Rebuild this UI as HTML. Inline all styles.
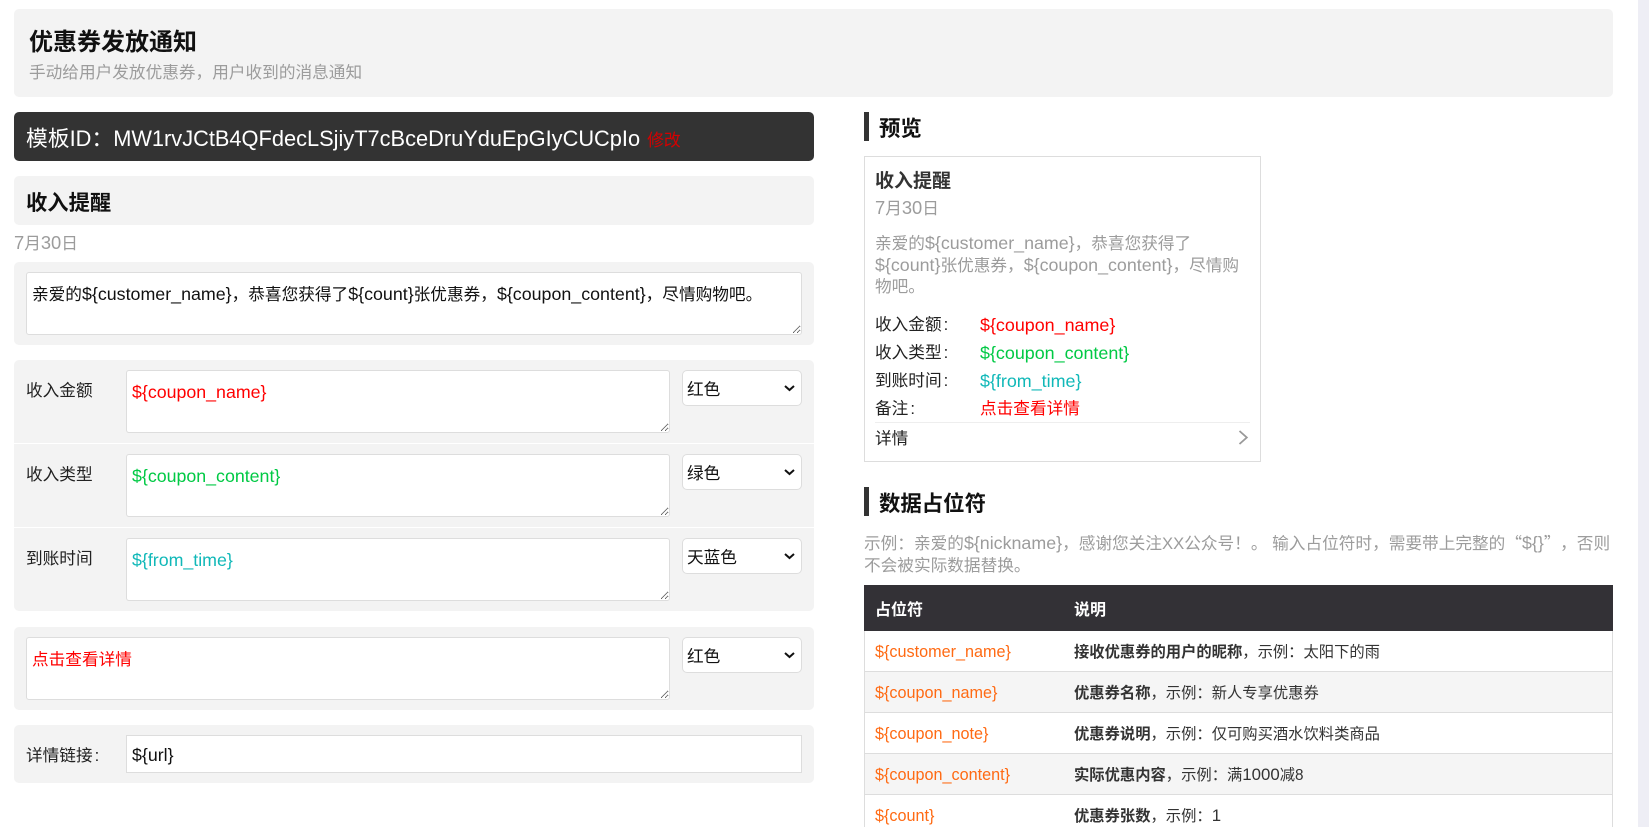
<!DOCTYPE html>
<html lang="zh">
<head>
<meta charset="utf-8">
<title>优惠券发放通知</title>
<style>
html,body{margin:0;padding:0;width:1649px;height:827px;overflow:hidden;background:#fff}
body{font-family:"Liberation Sans","Noto Sans CJK SC",sans-serif;font-size:16.67px;color:#222;position:relative}
.a{position:absolute;white-space:nowrap}
.box{position:absolute;background:#f3f3f3;border-radius:5px}
textarea,input,select,.ta{position:absolute;box-sizing:border-box;font-family:"Liberation Sans","Noto Sans CJK SC",sans-serif;font-size:16.67px;background:#fff;border:1px solid #ddd;color:#111;outline:0;margin:0}
textarea,.ta{border-radius:3px;padding:10px 5px;line-height:22px;resize:both;overflow:hidden;white-space:nowrap}
textarea.lat{font-size:17.8px;padding-top:10px}
select{-webkit-appearance:none;appearance:none;border-radius:5px;width:120px;height:36px;padding:2px 0 0 4px;left:682px}
input{padding:2px 5px 0;font-size:17.8px}
.chev{position:absolute;left:784px;pointer-events:none}
.bar{position:absolute;left:864px;width:5px;background:#333}
.h{position:absolute;left:879px;font-size:21.4px;font-weight:bold;color:#111;line-height:28px;white-space:nowrap}
.g{color:#9c9c9c}
.r{color:#f00}.gn{color:#00c944}.t{color:#10b8b8}
.l{font-size:1.07em}
.n{font-size:1.1em}
.q{font-family:"Noto Sans CJK SC",sans-serif}
.lab{left:26px;line-height:22px}
.row{position:absolute;left:875px;line-height:28px;white-space:nowrap}
.row i{font-style:normal;margin-left:2px}
.row b{font-weight:normal;position:absolute;left:105px;top:0}
.row b.v{font-size:17.9px}
table{position:absolute;left:864px;top:585px;width:749px;border-collapse:separate;border-spacing:0;table-layout:fixed;font-size:15.3px;color:#333}
th{background:#333136;color:#fff;height:46px;padding:0;text-align:left;font-size:16px;font-weight:bold}
th:first-child{padding-left:11px}
td{height:40px;padding:0;border-bottom:1px solid #ddd;white-space:nowrap}
td:first-child{color:#ff6a13;font-size:16.2px;border-left:1px solid #ddd;padding-left:10px}
td:first-child span{position:relative;top:1px}
td:last-child{border-right:1px solid #ddd}
td:last-child b{color:#333}
tr.e td{background:#f5f5f5}
</style>
</head>
<body>
<div class="box" style="left:14px;top:9px;width:1599px;height:88px"></div>
<div class="a" style="left:29px;top:27px;font-size:24px;font-weight:bold;color:#111;line-height:32px">优惠券发放通知</div>
<div class="a g" style="left:29px;top:62px;line-height:22px">手动给用户发放优惠券，用户收到的消息通知</div>

<div class="box" style="left:14px;top:112px;width:800px;height:49px;background:#333"></div>
<div class="a" style="left:26px;top:124px;font-size:21.8px;line-height:30px;color:#fff">模板ID：MW1rvJCtB4QFdecLSjiyT7cBceDruYduEpGIyCUCpIo<span style="font-size:16.8px;color:#d40000;margin-left:7px">修改</span></div>

<div class="box" style="left:14px;top:176px;width:800px;height:49px"></div>
<div class="a" style="left:26px;top:188px;font-size:21.3px;font-weight:bold;color:#111;line-height:30px">收入提醒</div>
<div class="a g" style="left:14px;top:232px;line-height:22px"><span class="n">7</span>月<span class="n">30</span>日</div>

<div class="box" style="left:14px;top:262px;width:800px;height:83px"></div>
<div class="ta" style="left:26px;top:272px;width:776px;height:63px;padding-top:10px">亲爱的<span class="l">${customer_name}</span>，恭喜您获得了<span class="l">${count}</span>张优惠券，<span class="l">${coupon_content}</span>，尽情购物吧。</div>

<div class="box" style="left:14px;top:360px;width:800px;height:251px"></div>
<div class="a" style="left:14px;top:443px;width:800px;height:1px;background:#fff"></div>
<div class="a" style="left:14px;top:527px;width:800px;height:1px;background:#fff"></div>

<div class="a lab" style="top:380px">收入金额</div>
<textarea class="lat" style="left:126px;top:370px;width:544px;height:63px;color:#f00">${coupon_name}</textarea>
<select style="top:370px"><option>红色</option></select>
<svg class="chev" style="top:385px" width="11" height="7" viewBox="0 0 11 7"><path d="M1 1 L5.5 5 L10 1" fill="none" stroke="#111" stroke-width="2"/></svg>

<div class="a lab" style="top:464px">收入类型</div>
<textarea class="lat" style="left:126px;top:454px;width:544px;height:63px;color:#00c944">${coupon_content}</textarea>
<select style="top:454px"><option>绿色</option></select>
<svg class="chev" style="top:469px" width="11" height="7" viewBox="0 0 11 7"><path d="M1 1 L5.5 5 L10 1" fill="none" stroke="#111" stroke-width="2"/></svg>

<div class="a lab" style="top:548px">到账时间</div>
<textarea class="lat" style="left:126px;top:538px;width:544px;height:63px;color:#10b8b8">${from_time}</textarea>
<select style="top:538px"><option>天蓝色</option></select>
<svg class="chev" style="top:553px" width="11" height="7" viewBox="0 0 11 7"><path d="M1 1 L5.5 5 L10 1" fill="none" stroke="#111" stroke-width="2"/></svg>

<div class="box" style="left:14px;top:627px;width:800px;height:83px"></div>
<textarea style="left:26px;top:637px;width:644px;height:63px;color:#f00;padding-top:11px">点击查看详情</textarea>
<select style="top:637px"><option>红色</option></select>
<svg class="chev" style="top:652px" width="11" height="7" viewBox="0 0 11 7"><path d="M1 1 L5.5 5 L10 1" fill="none" stroke="#111" stroke-width="2"/></svg>

<div class="box" style="left:14px;top:725px;width:800px;height:58px"></div>
<div class="a lab" style="top:745px">详情链接<span style="margin-left:2px">:</span></div>
<input style="left:126px;top:735px;width:676px;height:38px" value="${url}">

<div class="bar" style="top:112px;height:29px"></div>
<div class="h" style="top:115px">预览</div>

<div class="a" style="left:864px;top:156px;width:395px;height:304px;border:1px solid #ddd"></div>
<div class="a" style="left:875px;top:170px;font-size:19px;font-weight:bold;color:#333;line-height:24px">收入提醒</div>
<div class="a g" style="left:875px;top:197px;line-height:22px"><span class="n">7</span>月<span class="n">30</span>日</div>
<div class="a g" style="left:875px;top:233px;line-height:21.6px">亲爱的<span class="l">${customer_name}</span>，恭喜您获得了<br><span class="l">${count}</span>张优惠券，<span class="l">${coupon_content}</span>，尽情购<br>物吧。</div>
<div class="row" style="top:311px">收入金额<i>:</i><b class="r v">${coupon_name}</b></div>
<div class="row" style="top:339px">收入类型<i>:</i><b class="gn v">${coupon_content}</b></div>
<div class="row" style="top:367px">到账时间<i>:</i><b class="t v">${from_time}</b></div>
<div class="row" style="top:395px">备注<i>:</i><b class="r">点击查看详情</b></div>
<div class="a" style="left:875px;top:422px;width:375px;height:1px;background:#eee"></div>
<div class="a" style="left:875px;top:428px;line-height:22px">详情</div>
<svg class="a" style="left:1238px;top:430px" width="11" height="15" viewBox="0 0 11 15"><path d="M1.5 1 L8.8 7.5 L1.5 14" fill="none" stroke="#999" stroke-width="1.8"/></svg>

<div class="bar" style="top:487px;height:29px"></div>
<div class="h" style="top:490px">数据占位符</div>
<div class="a g" style="left:864px;top:531px;line-height:22px">示例：亲爱的<span class="l">${nickname}</span>，感谢您关注XX公众号！。 输入占位符时，需要带上完整的<span class="q">“</span><span class="l">${}</span><span class="q">”</span><span style="margin-left:8px">，</span>否则<br>不会被实际数据替换。</div>

<table>
<colgroup><col style="width:210px"><col></colgroup>
<tr><th>占位符</th><th>说明</th></tr>
<tr><td><span>${customer_name}</span></td><td><b>接收优惠券的用户的昵称</b>，示例：太阳下的雨</td></tr>
<tr class="e"><td><span>${coupon_name}</span></td><td><b>优惠券名称</b>，示例：新人专享优惠券</td></tr>
<tr><td><span>${coupon_note}</span></td><td><b>优惠券说明</b>，示例：仅可购买酒水饮料类商品</td></tr>
<tr class="e"><td><span>${coupon_content}</span></td><td><b>实际优惠内容</b>，示例：满<span class="n">1000</span>减8</td></tr>
<tr><td><span>${count}</span></td><td><b>优惠券张数</b>，示例：<span class="n">1</span></td></tr>
</table>

<div class="a" style="left:1638px;top:0;width:11px;height:827px;background:#eeeef5"></div>
</body>
</html>
